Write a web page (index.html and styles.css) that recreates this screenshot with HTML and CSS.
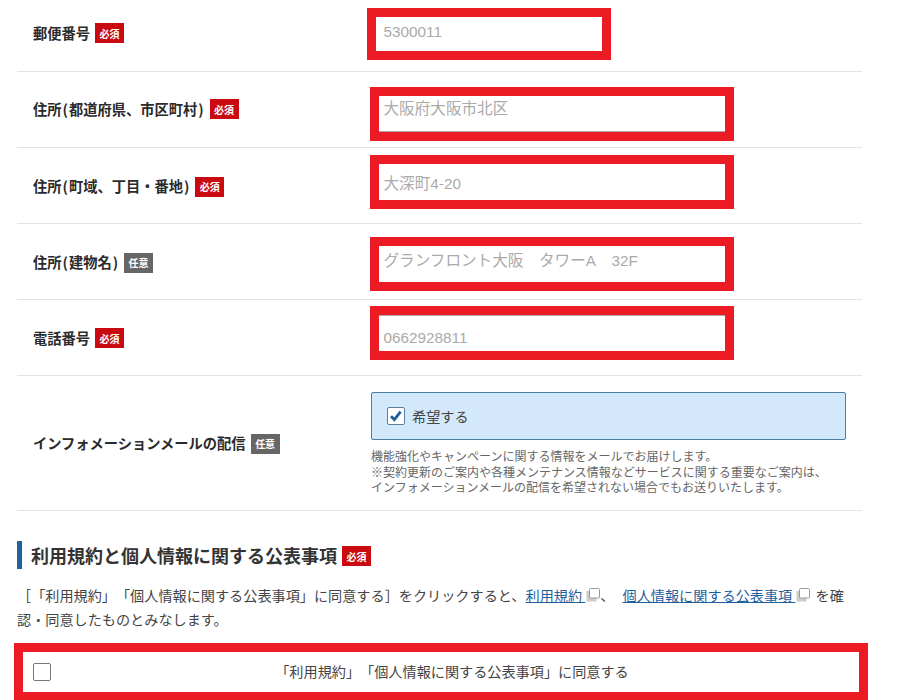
FILE: index.html
```html
<!DOCTYPE html>
<html lang="ja">
<head>
<meta charset="utf-8">
<title>お客様情報の入力</title>
<link rel="stylesheet" href="styles.css">
</head>
<body>
<main class="page">
  <section class="form">
    <div class="row row-zip">
      <div class="label"><span>郵便番号</span><em class="badge">必須</em></div>
      <div class="mark mark-short"><div class="field"><span class="digits">5300011</span></div></div>
    </div>
    <div class="row row-pref">
      <div class="label"><span>住所<i class="par">(</i>都道府県、市区町村<i class="par">)</i></span><em class="badge">必須</em></div>
      <div class="mark"><div class="field line-bottom"><span class="cjk">大阪府大阪市北区</span></div></div>
    </div>
    <div class="row row-town">
      <div class="label"><span>住所<i class="par">(</i>町域、丁目・番地<i class="par">)</i></span><em class="badge">必須</em></div>
      <div class="mark"><div class="field"><span class="cjk">大深町</span><span class="digits">4-20</span></div></div>
    </div>
    <div class="row row-bldg">
      <div class="label"><span>住所<i class="par">(</i>建物名<i class="par">)</i></span><em class="badge badge-opt">任意</em></div>
      <div class="mark"><div class="field"><span class="cjk">グランフロント大阪　タワー</span><span class="digits">A</span><span class="cjk">　</span><span class="digits">32F</span></div></div>
    </div>
    <div class="row row-tel">
      <div class="label"><span>電話番号</span><em class="badge">必須</em></div>
      <div class="mark"><div class="field line-top"><span class="digits">0662928811</span></div></div>
    </div>
    <div class="row row-mail">
      <div class="label"><span>インフォメーションメールの配信</span><em class="badge badge-opt">任意</em></div>
      <div class="mail">
        <div class="optin">
          <span class="box box-on">
            <svg viewBox="0 0 16 16" width="16" height="16" aria-hidden="true"><path d="M3 8.2 6.4 11.6 12.6 3.6" fill="none" stroke="#1f5f9e" stroke-width="2.8"/></svg>
          </span>
          <span>希望する</span>
        </div>
        <p class="note">機能強化やキャンペーンに関する情報をメールでお届けします。<br>※契約更新のご案内や各種メンテナンス情報などサービスに関する重要なご案内は、<br>インフォメーションメールの配信を希望されない場合でもお送りいたします。</p>
      </div>
    </div>
  </section>

  <section class="terms">
    <h2 class="title"><span>利用規約と個人情報に関する公表事項</span><em class="badge">必須</em></h2>
    <p class="lead">［「利用規約」「個人情報に関する公表事項」に同意する］をクリックすると、<a href="#">利用規約 </a><svg class="ext" viewBox="0 0 14 14" width="14" height="14" aria-hidden="true"><rect x="0.5" y="3" width="10" height="10.5" fill="#ccc"/><rect x="3.5" y="0.5" width="10" height="9.5" rx="1" fill="#fff" stroke="#999" stroke-width="1"/></svg>、 <a class="link-next" href="#">個人情報に関する公表事項 </a><svg class="ext ext-last" viewBox="0 0 14 14" width="14" height="14" aria-hidden="true"><rect x="0.5" y="3" width="10" height="10.5" fill="#ccc"/><rect x="3.5" y="0.5" width="10" height="9.5" rx="1" fill="#fff" stroke="#999" stroke-width="1"/></svg> を確認・同意したものとみなします。</p>
  </section>
</main>
<div class="agree-wrap">
  <div class="agree">
    <span class="box"></span>
    <span class="agree-text">「利用規約」「個人情報に関する公表事項」に同意する</span>
  </div>
</div>
</body>
</html>
```
FILE: styles.css
```css
* { box-sizing: border-box; }
html, body { margin: 0; padding: 0; }
body {
  width: 909px;
  height: 700px;
  overflow: hidden;
  background: #fff;
  color: #333;
  font-family: "Liberation Sans", "Noto Sans CJK JP", sans-serif;
  font-size: 14.15px;
  text-spacing-trim: space-all;
  font-feature-settings: "chws" 0, "palt" 0;
}
.page { padding-left: 17px; width: 862px; }
.row {
  display: flex;
  align-items: flex-start;
  border-bottom: 1.5px solid #e4e4e4;
}
.row-zip { height: 72px; padding-top: 8px; }
.row-pref { height: 76px; padding-top: 15px; }
.row-town { height: 76px; padding-top: 7px; }
.row-bldg { height: 76px; padding-top: 13px; }
.row-tel { height: 76px; padding-top: 6px; }
.row-mail { height: 135px; padding-top: 16px; }

.label {
  width: 353px;
  flex: none;
  padding-left: 16px;
  display: flex;
  align-items: center;
  gap: 5px;
  font-weight: 700;
  font-size: 14.25px;
  color: #2b2b2b;
  font-family: "Noto Sans CJK JP", sans-serif;
  align-self: center;
}
.row-zip .label { width: 350px; margin-top: -15px; }
.row-pref .label { margin-top: -18px; }
.row-town .label { margin-top: -7px; }
.row-bldg .label { margin-top: -13px; }
.row-tel .label { margin-top: -7px; }
.row-mail .label { width: 354px; margin-top: -17px; }
.par { font-style: normal; padding: 0 1px; }

.badge {
  flex: none;
  width: 29px;
  height: 20px;
  display: flex;
  align-items: center;
  justify-content: center;
  font-style: normal;
  font-weight: 700;
  font-size: 10px;
  color: #fff;
  background: #c90a10;
  margin-top: 2px;
  font-family: "Noto Sans CJK JP", sans-serif;
}
.badge-opt { background: #666; }

.mark {
  width: 364px;
  height: 54px;
  border: 9px solid #ed1c24;
  background: #fff;
}
.mark-short { width: 244px; height: 52px; }
.field {
  height: 100%;
  padding: 5px 0 0 4.5px;
  color: #aaa;
  font-size: 15.3px;
  line-height: 22px;
  white-space: nowrap;
}
.cjk { font-size: 15.6px; }
.line-bottom { border-bottom: 1px solid #aaa; }
.line-top { border-top: 1px solid #aaa; padding-top: 11px; }
.row-town .field { padding-top: 9px; }
.row-pref .field { padding-top: 2px; }
.row-bldg .field { padding-top: 4px; }
.row-zip .field { padding: 4px 0 0 7.5px; }

.mail { width: 475px; }
.optin {
  width: 475px;
  height: 48px;
  display: flex;
  align-items: center;
  gap: 7px;
  padding-left: 15px;
  background: #d3e9fb;
  border: 1px solid #4a7f9f;
  border-radius: 2px;
  color: #444;
}
.box {
  flex: none;
  width: 18px;
  height: 18px;
  border: 1px solid #777;
  border-radius: 2px;
  background: #fff;
  display: block;
}
.box-on { border-color: #5a7f9f; }
.box-on svg { display: block; }
.note {
  margin: 10px 0 0;
  font-size: 12px;
  line-height: 15.5px;
  color: #666;
  white-space: nowrap;
}

.terms { padding-top: 30px; }
.title {
  margin: 0;
  height: 28px;
  display: flex;
  align-items: center;
  gap: 5px;
  border-left: 5px solid #1f6299;
  padding-left: 9px;
  font-size: 18px;
  font-weight: 700;
  color: #333;
  font-family: "Noto Sans CJK JP", sans-serif;
}
.lead {
  margin: 14px 0 0;
  width: 829px;
  line-height: 24px;
  color: #444;
  font-family: "Noto Sans CJK JP", sans-serif;
}
.lead a { color: #1f5f9e; text-decoration: underline; }
.lead .link-next { margin-left: 5px; }
.ext { vertical-align: -1px; margin-left: 1px; }
.ext-last { margin-right: 2px; }

.agree-wrap {
  margin-top: 12px;
  height: 58px;
  border-bottom: 1px solid #888;
  padding-left: 14px;
}
.agree {
  width: 854px;
  height: 58px;
  border: 9px solid #ed1c24;
  background: #fff;
  display: flex;
  align-items: center;
  padding-left: 10px;
}
.agree-text {
  flex: 1;
  text-align: center;
  padding-right: 6px;
  margin-top: -3px;
  color: #444;
  font-family: "Noto Sans CJK JP", sans-serif;
}
```
